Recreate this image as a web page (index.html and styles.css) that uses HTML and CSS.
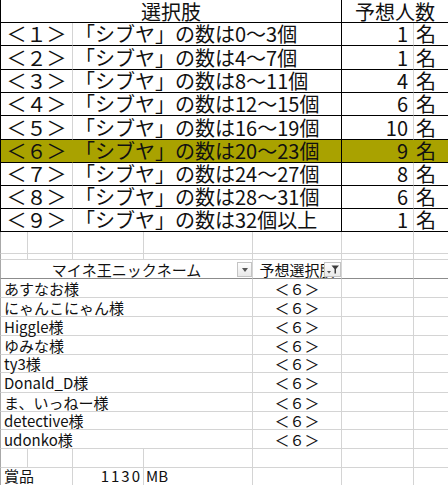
FILE: index.html
```html
<!DOCTYPE html>
<html lang="ja">
<head>
<meta charset="utf-8">
<title>シブヤ予想</title>
<link rel="stylesheet" href="styles.css">
</head>
<body>
<div class="sheet">
  <div class="sel">
    <div class="c head head-left">選択肢</div>
    <div class="c head head-right">予想人数</div>

    <div class="c no">＜１＞</div><div class="c txt">「シブヤ」の数は0～3個</div><div class="c num">1</div><div class="c mei">名</div>
    <div class="c no">＜２＞</div><div class="c txt">「シブヤ」の数は4～7個</div><div class="c num">1</div><div class="c mei">名</div>
    <div class="c no">＜３＞</div><div class="c txt">「シブヤ」の数は8～11個</div><div class="c num">4</div><div class="c mei">名</div>
    <div class="c no">＜４＞</div><div class="c txt">「シブヤ」の数は12～15個</div><div class="c num">6</div><div class="c mei">名</div>
    <div class="c no">＜５＞</div><div class="c txt">「シブヤ」の数は16～19個</div><div class="c num">10</div><div class="c mei">名</div>
    <div class="c no hl">＜６＞</div><div class="c txt hl">「シブヤ」の数は20～23個</div><div class="c num hl">9</div><div class="c mei hl">名</div>
    <div class="c no">＜７＞</div><div class="c txt">「シブヤ」の数は24～27個</div><div class="c num">8</div><div class="c mei">名</div>
    <div class="c no">＜８＞</div><div class="c txt">「シブヤ」の数は28～31個</div><div class="c num">6</div><div class="c mei">名</div>
    <div class="c no">＜９＞</div><div class="c txt">「シブヤ」の数は32個以上</div><div class="c num">1</div><div class="c mei">名</div>
  </div>

  <div class="lower">
    <div class="g edge"></div><div class="g"></div><div class="g"></div><div class="g"></div><div class="g"></div><div class="g"></div><div class="g"></div>
    <div class="g edge"></div><div class="g"></div><div class="g"></div><div class="g"></div><div class="g"></div><div class="g"></div><div class="g"></div>

    <div class="g edge nick-h hrow">マイネ王ニックネーム<span class="fbtn fbtn-nick"><span class="tri"></span></span></div>
    <div class="g val-h hrow"><span class="clip">予想選択肢</span><span class="fbtn fbtn-val"><svg width="14" height="11" viewBox="0 0 14 11"><path d="M1 7h4l-2 2.5z" fill="#555"/><path d="M5.5 1.5h7.5l-3 3.5v4.5h-1.5v-4.5z" fill="#3c3c3c"/></svg></span></div>
    <div class="g hrow"></div><div class="g hrow"></div>

    <div class="g edge nick">あすなお様</div><div class="g val">＜６＞</div><div class="g"></div><div class="g"></div>
    <div class="g edge nick">にゃんこにゃん様</div><div class="g val">＜６＞</div><div class="g"></div><div class="g"></div>
    <div class="g edge nick">Higgle様</div><div class="g val">＜６＞</div><div class="g"></div><div class="g"></div>
    <div class="g edge nick">ゆみな様</div><div class="g val">＜６＞</div><div class="g"></div><div class="g"></div>
    <div class="g edge nick">ty3様</div><div class="g val">＜６＞</div><div class="g"></div><div class="g"></div>
    <div class="g edge nick">Donald_D様</div><div class="g val">＜６＞</div><div class="g"></div><div class="g"></div>
    <div class="g edge nick">ま、いっねー様</div><div class="g val">＜６＞</div><div class="g"></div><div class="g"></div>
    <div class="g edge nick">detective様</div><div class="g val">＜６＞</div><div class="g"></div><div class="g"></div>
    <div class="g edge nick">udonko様</div><div class="g val">＜６＞</div><div class="g"></div><div class="g"></div>

    <div class="g edge"></div><div class="g"></div><div class="g"></div><div class="g"></div><div class="g"></div><div class="g"></div><div class="g"></div>

    <div class="g edge prize last">賞品</div><div class="g amount last">1130</div><div class="g unit last">MB</div><div class="g last"></div><div class="g last"></div><div class="g last"></div>
  </div>
</div>
</body>
</html>
```
FILE: styles.css
```css
* {
  box-sizing: border-box;
  margin: 0;
  padding: 0;
}

html, body {
  background: #ffffff;
}

body {
  margin: 0;
  width: 448px;
  height: 485px;
  overflow: hidden;
  font-family: "Noto Sans CJK JP", "Noto Sans", sans-serif;
  color: #111111;
}

.sheet {
  display: flex;
  flex-direction: column;
  width: 448px;
}

/* ---------- upper table ---------- */
.sel {
  display: grid;
  grid-template-columns: 27px 45px 71px 109px 89px 72px 35px;
  grid-template-rows: 23px 23px 24px 23px 23px 24px 23px 23px 23px 23px;
  font-size: 20px;
  line-height: 20px;
}

.c {
  display: flex;
  align-items: center;
  white-space: nowrap;
  border-bottom: 1px solid #000000;
}

.head {
  justify-content: center;
  padding-top: 2px;
}

.head-left {
  grid-column: 1 / 6;
  border-left: 1px solid #000000;
}

.head-right {
  grid-column: 6 / 8;
  border-left: 1px solid #000000;
}

.no {
  grid-column: 1 / 3;
  justify-content: center;
  border-left: 1px solid #000000;
}

.txt {
  grid-column: 3 / 6;
  padding-left: 2px;
  border-left: 1px solid #d4d4d4;
}

.num {
  justify-content: flex-end;
  padding-right: 5px;
  border-left: 1px solid #000000;
}

.mei {
  padding-left: 2px;
  border-left: 1px solid #d4d4d4;
}

.hl {
  background: #a9a200;
}

.txt.hl,
.mei.hl {
  border-left-color: #a9a200;
}

/* ---------- lower sheet ---------- */
.lower {
  display: grid;
  grid-template-columns: 27px 45px 71px 109px 89px 72px 35px;
  grid-template-rows: 22px 6px 19px 19px 19px 19px 19px 18px 20px 19px 18px 19px 19px 18px;
  font-size: 15px;
  line-height: 15px;
}

.g {
  display: flex;
  align-items: center;
  white-space: nowrap;
  border-left: 1px solid #d4d4d4;
  border-bottom: 1px solid #d4d4d4;
}

.g.edge {
  border-left-color: #a8a8a8;
}

.g.last {
  padding-bottom: 2px;
}

.hrow {
  border-bottom-color: #8c8c8c;
}

.nick-h {
  grid-column: 1 / 5;
  justify-content: center;
  position: relative;
}

.val-h {
  justify-content: center;
  position: relative;
}

.clip {
  display: block;
}

.fbtn {
  position: absolute;
  top: 2px;
  height: 15px;
  border: 1px solid #c4c4c4;
  background: linear-gradient(#fefefe, #e9e9e9);
  display: flex;
  align-items: center;
  justify-content: center;
  z-index: 1;
}

.fbtn-nick {
  right: 0;
  width: 15px;
}

.fbtn-val {
  right: 0;
  width: 17px;
}

.tri {
  width: 0;
  height: 0;
  border-left: 3px solid transparent;
  border-right: 3px solid transparent;
  border-top: 4px solid #555555;
  margin-top: 1px;
}

.nick {
  grid-column: 1 / 5;
  padding-left: 3px;
}

.val {
  justify-content: center;
}

.prize {
  grid-column: 1 / 3;
  padding-left: 3px;
}

.amount {
  justify-content: flex-end;
  padding-right: 1px;
  letter-spacing: 2px;
}

.unit {
  padding-left: 2px;
}
```
